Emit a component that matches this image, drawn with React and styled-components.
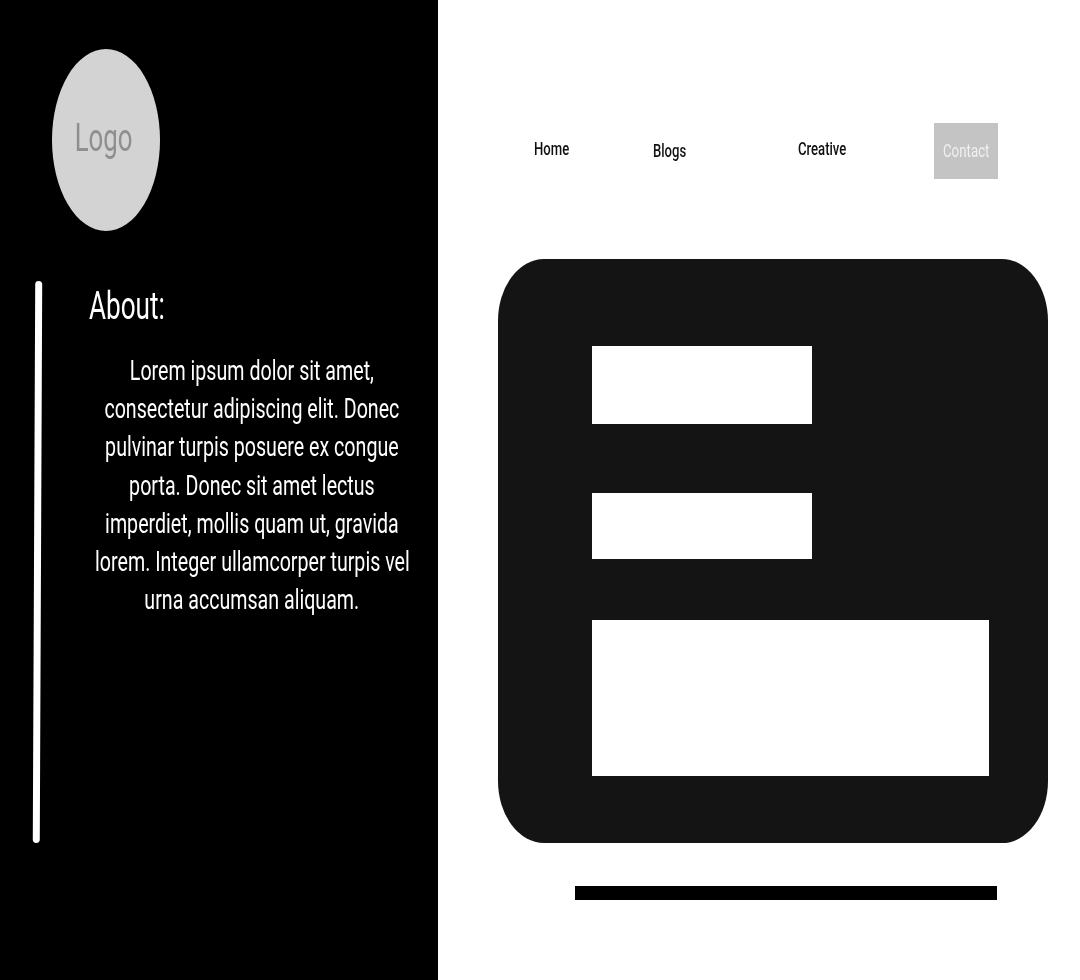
import React from "react";
import styled, { createGlobalStyle } from "styled-components";

const GlobalStyle = createGlobalStyle`
    html, body {
        margin: 0;
        padding: 0;
        background: #fff;
    }
    body {
        font-family: 'Roboto', 'Liberation Sans', sans-serif;
    }
`

const Page = styled.div`
    width: 1080px;
    height: 980px;
    display: flex;
    overflow: hidden;
`

const Sidebar = styled.aside`
    width: 438px;
    height: 980px;
    flex-shrink: 0;
    background: #000;
    box-sizing: border-box;
    padding: 49px 0 0 34px;
`

const LogoCircle = styled.div`
    width: 108px;
    height: 182px;
    margin-left: 18px;
    border-radius: 50%;
    background: #d3d3d3;
    display: flex;
    align-items: center;
    justify-content: center;
`

const LogoText = styled.span`
    font-size: 38px;
    color: #8f8f8f;
    transform: translate(-2px, -2px) scaleX(0.68);
    filter: blur(0.6px);
`

const SidebarBody = styled.div`
    display: flex;
    margin-top: 50px;
`

const Divider = styled.div`
    width: 7px;
    height: 562px;
    border-radius: 4px;
    background: #fff;
    transform: rotate(0.25deg);
`

const AboutColumn = styled.div`
    margin-left: 48px;
`

const AboutTitle = styled.h2`
    margin: 0;
    font-size: 39px;
    line-height: 50px;
    font-weight: 400;
    color: #fff;
    white-space: nowrap;
    transform: scaleX(0.67);
    transform-origin: left center;
    filter: blur(0.6px);
`

const AboutText = styled.p`
    margin: 21px 0 0 5px;
    width: 316px;
    font-size: 27px;
    line-height: 38.2px;
    color: #fff;
    text-align: center;
    white-space: nowrap;
    display: flex;
    flex-direction: column;
    align-items: center;
    filter: blur(0.6px);
`

const AboutLine = styled.span`
    display: block;
    transform: scaleX(0.727);
`

const Main = styled.main`
    flex: 1;
    box-sizing: border-box;
    padding: 123px 0 0 60px;
`

const Nav = styled.nav`
    height: 56px;
    margin-left: 36px;
    display: flex;
    align-items: flex-start;
`

const NavLink = styled.a`
    width: ${props => props.$width}px;
    margin-top: ${props => props.$top}px;
    font-size: 19px;
    font-weight: 500;
    line-height: 24px;
    color: #111;
    white-space: nowrap;
    transform: scaleX(0.69);
    transform-origin: left center;
    filter: blur(0.6px);
`

const ContactButton = styled.a`
    width: 64px;
    height: 56px;
    background: #c4c4c4;
    color: #f0f0f0;
    font-size: 19px;
    display: flex;
    align-items: center;
    justify-content: center;
    white-space: nowrap;
`

const ContactLabel = styled.span`
    transform: translateY(-1px) scaleX(0.7);
    filter: blur(0.6px);
`

const Card = styled.section`
    width: 550px;
    height: 584px;
    margin-top: 80px;
    box-sizing: border-box;
    padding: 87px 59px 0 94px;
    background: #141414;
    border-radius: 46px / 62px;
`

const Field = styled.div`
    width: ${props => props.$width}px;
    height: ${props => props.$height}px;
    margin-bottom: ${props => props.$gap}px;
    background: #fff;
`

const FooterBar = styled.div`
    width: 422px;
    height: 14px;
    margin: 43px 0 0 77px;
    background: #000;
`

const aboutLines = [
    "Lorem ipsum dolor sit amet,",
    "consectetur adipiscing elit. Donec",
    "pulvinar turpis posuere ex congue",
    "porta. Donec sit amet lectus",
    "imperdiet, mollis quam ut, gravida",
    "lorem. Integer ullamcorper turpis vel",
    "urna accumsan aliquam.",
]

const App = () => {
    return (
        <Page>
            <GlobalStyle />
            <Sidebar>
                <LogoCircle>
                    <LogoText>Logo</LogoText>
                </LogoCircle>
                <SidebarBody>
                    <Divider />
                    <AboutColumn>
                        <AboutTitle>About:</AboutTitle>
                        <AboutText>
                            {aboutLines.map(line => <AboutLine key={line}>{line}</AboutLine>)}
                        </AboutText>
                    </AboutColumn>
                </SidebarBody>
            </Sidebar>
            <Main>
                <Nav>
                    <NavLink $width={119} $top={14}>Home</NavLink>
                    <NavLink $width={145} $top={16}>Blogs</NavLink>
                    <NavLink $width={136} $top={14}>Creative</NavLink>
                    <ContactButton><ContactLabel>Contact</ContactLabel></ContactButton>
                </Nav>
                <Card>
                    <Field $width={220} $height={78} $gap={69} />
                    <Field $width={220} $height={66} $gap={61} />
                    <Field $width={397} $height={156} $gap={0} />
                </Card>
                <FooterBar />
            </Main>
        </Page>
    )
}

export default App
